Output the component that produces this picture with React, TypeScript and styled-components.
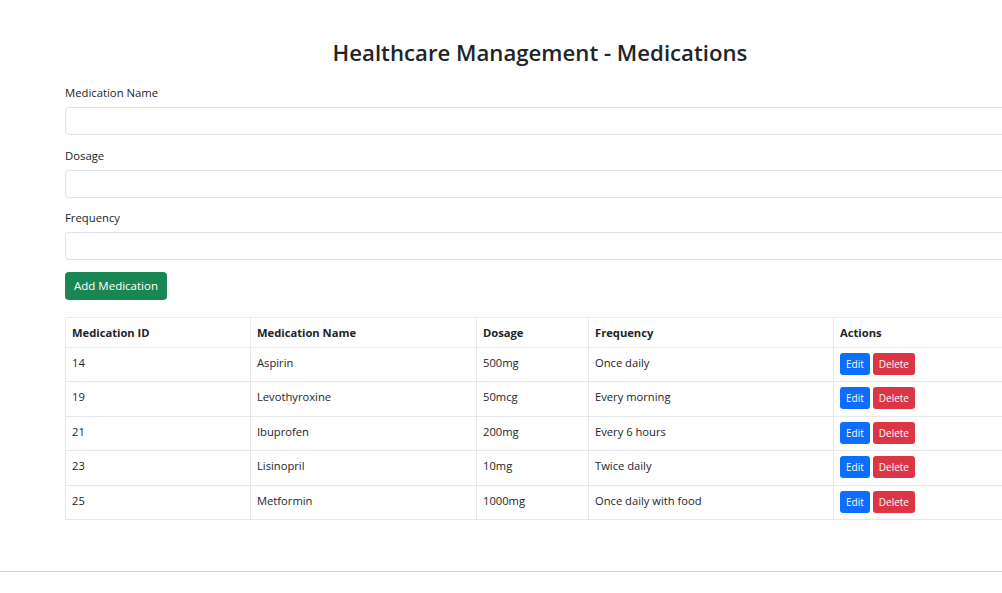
import React from "react";
import styled, { createGlobalStyle } from "styled-components";

const GlobalStyle = createGlobalStyle`
  html, body { margin: 0; padding: 0; background: #fff; overflow: hidden; }
  body {
    font-family: "Segoe UI", "Open Sans", "Noto Sans", Arial, sans-serif;
    color: #212529;
    font-size: 12px;
    line-height: 1.5;
  }
  * { box-sizing: border-box; }
`;

const Page = styled.div`
  width: 100%;
`;

const Container = styled.main`
  width: 950px;
  margin-left: 65px;
  padding-top: 37px;
`;

const Title = styled.h2`
  margin: 0 0 15px;
  text-align: center;
  font-size: 22.2px;
  font-weight: 600;
  line-height: 32px;
  color: #212529;
`;

const Field = styled.div`
  display: flex;
  flex-direction: column;
  margin-bottom: 11.5px;
`;

const Label = styled.label`
  display: block;
  font-size: 11.3px;
  line-height: 18px;
  margin-bottom: 5px;
  color: #212529;
`;

const Input = styled.input`
  display: block;
  width: 100%;
  height: 28px;
  padding: 4px 9px;
  font: inherit;
  border: 1px solid #dee2e6;
  border-radius: 4px;
  background: #fff;
  outline: none;
`;

const Button = styled.button<{ $variant: "success" | "primary" | "danger"; $small?: boolean }>`
  display: inline-block;
  font-family: inherit;
  font-size: ${(p) => (p.$small ? "10px" : "11.5px")};
  line-height: ${(p) => (p.$small ? "16px" : "18px")};
  padding: ${(p) => (p.$small ? "2px 5px" : "4px 9px")};
  border-radius: ${(p) => (p.$small ? "3px" : "4px")};
  color: #fff;
  border: 1px solid transparent;
  cursor: pointer;
  background: ${(p) =>
    p.$variant === "success" ? "#198754" : p.$variant === "primary" ? "#0d6efd" : "#dc3545"};
`;

const AddButton = styled(Button)`
  height: 28px;
  width: 102px;
  padding: 0;
`;

const Table = styled.table`
  width: 950px;
  margin-top: 17px;
  border-collapse: collapse;
  font-size: 11.2px;
`;

const Th = styled.th<{ $w?: number }>`
  text-align: left;
  font-weight: 700;
  padding: 6px;
  line-height: 17px;
  border: 1px solid #e9ecef;
  width: ${(p) => (p.$w ? `${p.$w}px` : "auto")};
`;

const Td = styled.td`
  padding: 6px;
  line-height: 18px;
  vertical-align: top;
  border: 1px solid #e5e7eb;
  height: 34.6px;
`;

const ActionCell = styled(Td)`
  padding: 5px 6px 4px;
`;

const Actions = styled.div`
  display: flex;
  gap: 3px;
`;

const Footer = styled.footer`
  margin-top: 51px;
  border-top: 1px solid #ced4da;
  height: 30px;
`;

const meds = [
  { id: 14, name: "Aspirin", dosage: "500mg", freq: "Once daily" },
  { id: 19, name: "Levothyroxine", dosage: "50mcg", freq: "Every morning" },
  { id: 21, name: "Ibuprofen", dosage: "200mg", freq: "Every 6 hours" },
  { id: 23, name: "Lisinopril", dosage: "10mg", freq: "Twice daily" },
  { id: 25, name: "Metformin", dosage: "1000mg", freq: "Once daily with food" },
];

export default function App() {
  return (
    <Page>
      <GlobalStyle />
      <Container>
        <Title>Healthcare Management - Medications</Title>
        <Field>
          <Label>Medication Name</Label>
          <Input />
        </Field>
        <Field>
          <Label>Dosage</Label>
          <Input />
        </Field>
        <Field>
          <Label>Frequency</Label>
          <Input />
        </Field>
        <AddButton $variant="success">Add Medication</AddButton>
        <Table>
          <thead>
            <tr>
              <Th $w={185}>Medication ID</Th>
              <Th $w={226}>Medication Name</Th>
              <Th $w={112}>Dosage</Th>
              <Th $w={245}>Frequency</Th>
              <Th>Actions</Th>
            </tr>
          </thead>
          <tbody>
            {meds.map((m) => (
              <tr key={m.id}>
                <Td>{m.id}</Td>
                <Td>{m.name}</Td>
                <Td>{m.dosage}</Td>
                <Td>{m.freq}</Td>
                <ActionCell>
                  <Actions>
                    <Button $variant="primary" $small>Edit</Button>
                    <Button $variant="danger" $small>Delete</Button>
                  </Actions>
                </ActionCell>
              </tr>
            ))}
          </tbody>
        </Table>
      </Container>
      <Footer />
    </Page>
  );
}
